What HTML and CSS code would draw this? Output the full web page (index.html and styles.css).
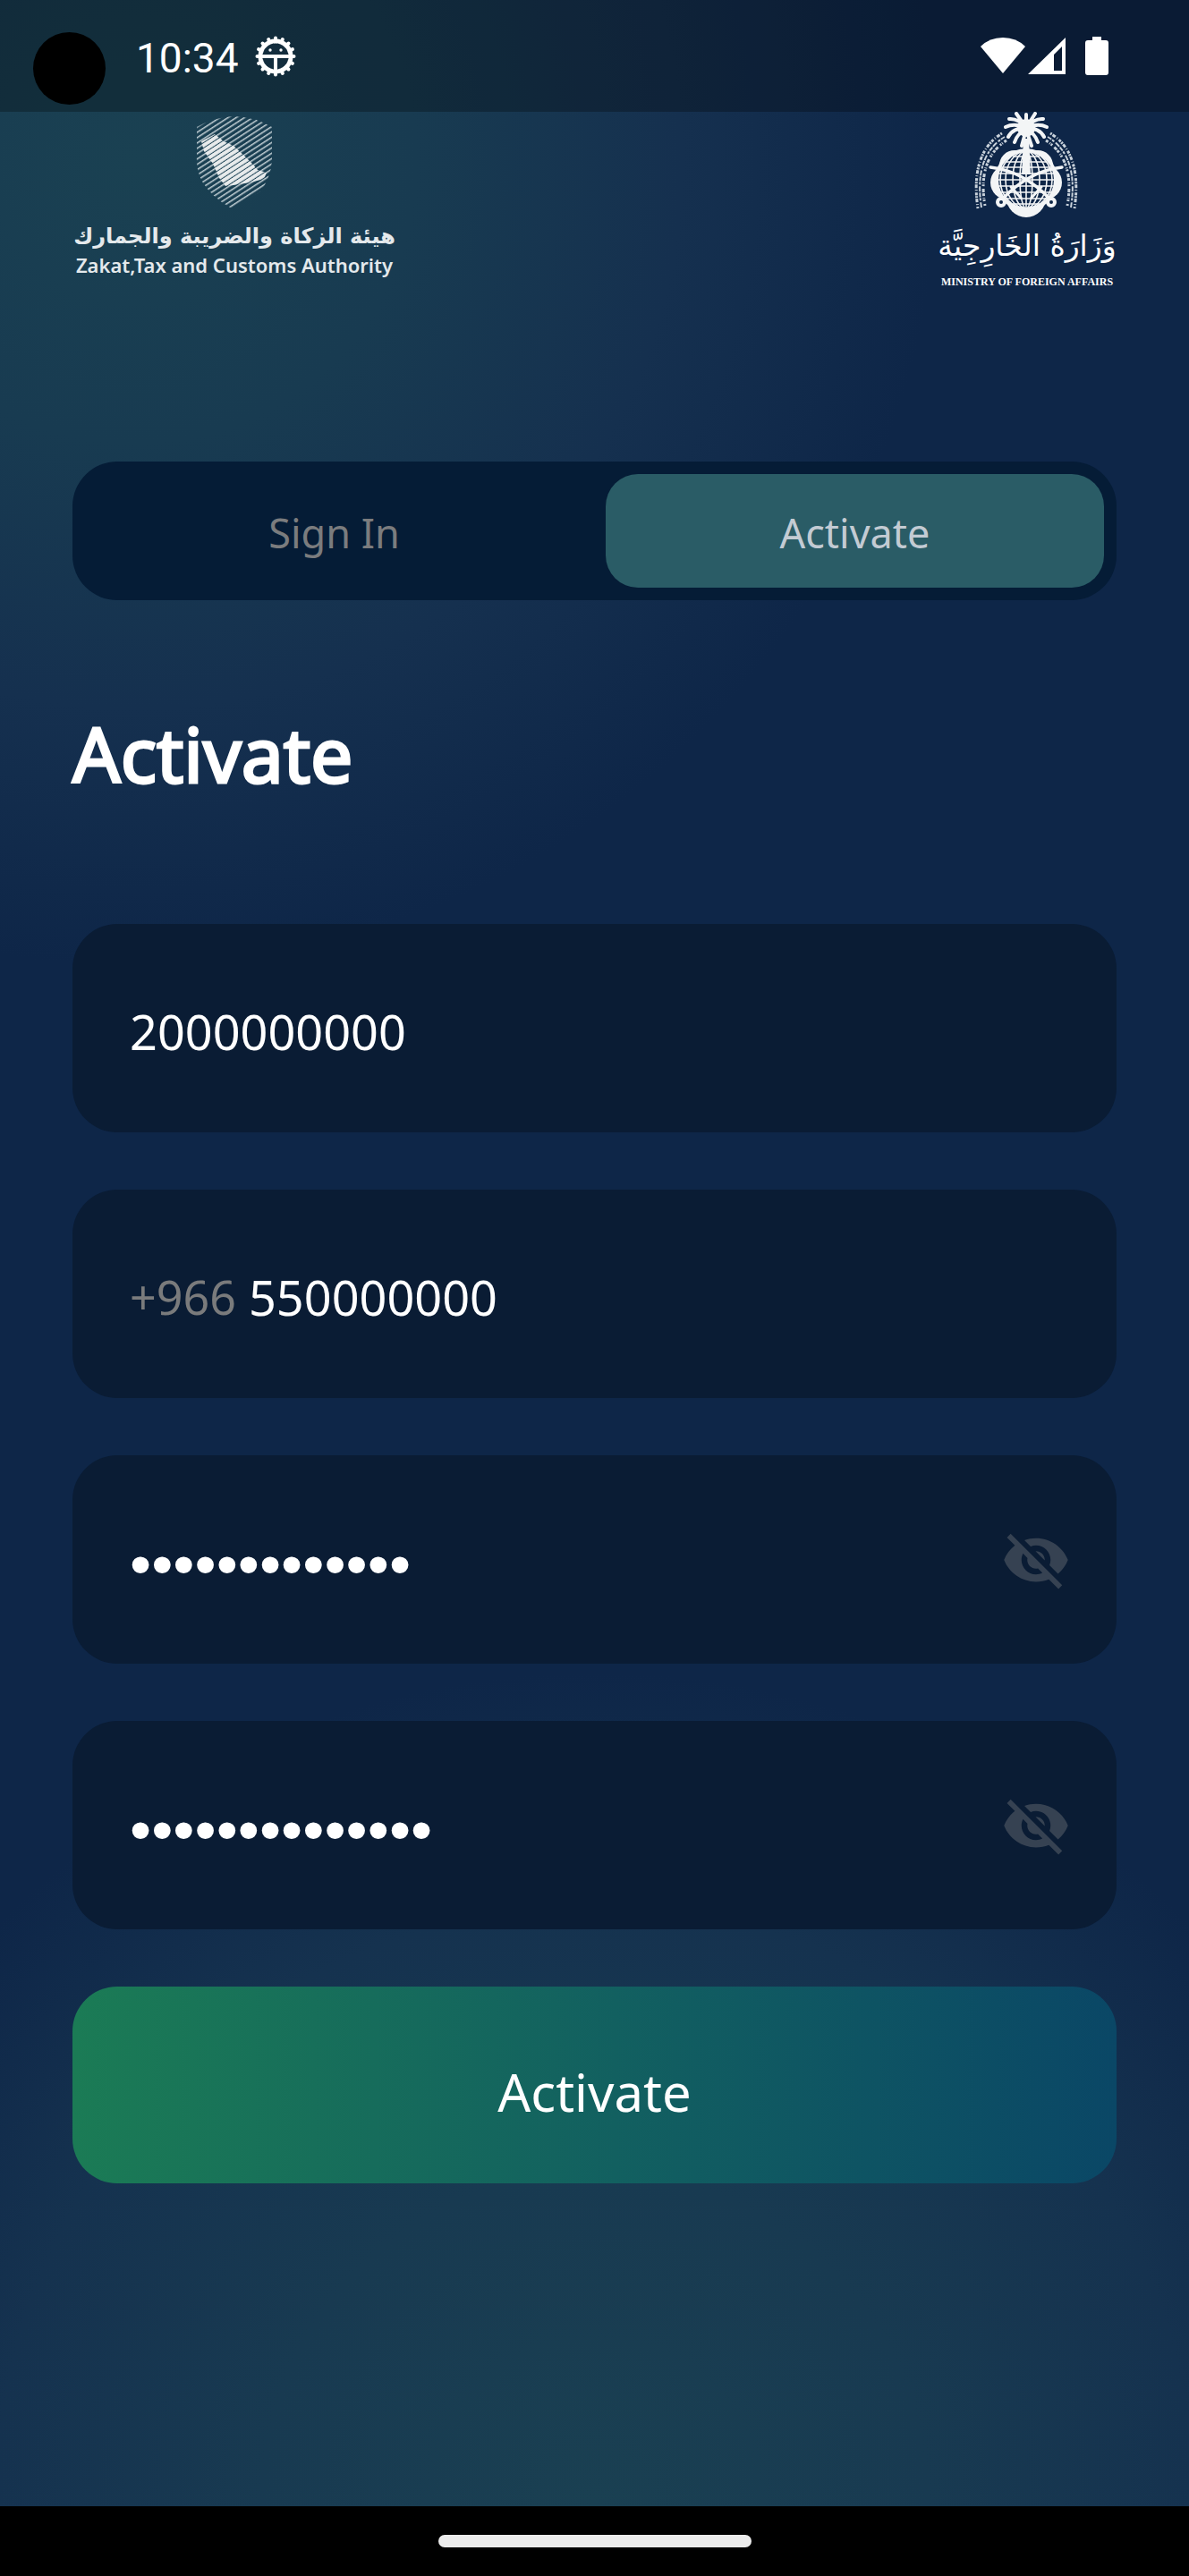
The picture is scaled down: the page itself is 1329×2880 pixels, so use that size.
FILE: index.html
```html
<!DOCTYPE html>
<html lang="en">
<head>
<meta charset="utf-8">
<meta name="viewport" content="width=device-width, initial-scale=1">
<title>Activate</title>
<link rel="stylesheet" href="styles.css">
</head>
<body>
<div class="screen">
  <div class="status">
    <span class="camera"></span>
    <span class="time">10:34</span>
    <svg class="gear" viewBox="0 0 46 46" aria-hidden="true">
      <circle cx="23" cy="23" r="17" fill="none" stroke="#fff" stroke-width="5"/>
      <g stroke="#fff" stroke-width="4" stroke-linecap="round">
        <path id="t" d="M23 2.500V43.500"/>
        <path d="M23 2.500V43.500" transform="rotate(22.500 23 23)"/>
        <path d="M23 2.500V43.500" transform="rotate(45 23 23)"/>
        <path d="M23 2.500V43.500" transform="rotate(67.500 23 23)"/>
        <path d="M23 2.500V43.500" transform="rotate(90 23 23)"/>
        <path d="M23 2.500V43.500" transform="rotate(112.500 23 23)"/>
        <path d="M23 2.500V43.500" transform="rotate(135 23 23)"/>
        <path d="M23 2.500V43.500" transform="rotate(157.500 23 23)"/>
      </g>
      <circle cx="23" cy="23" r="14.500" fill="#132d3d"/>
      <path d="M6 21h34v4H25v15h-4V25H6z" fill="#fff"/>
      <circle cx="17" cy="16" r="1.700" fill="#fff"/><circle cx="29" cy="16" r="1.700" fill="#fff"/>
    </svg>
    <span class="indicators">
      <svg width="50" height="43" viewBox="0 0 50 43" aria-hidden="true"><path d="M0 11Q10 1 25 1T50 11L25 41z" fill="#fff"/></svg>
      <svg width="42" height="43" viewBox="0 0 42 43" aria-hidden="true"><path d="M42 1v41H0zM38 11l-9 9v18h9z" fill="#fff" fill-rule="evenodd"/></svg>
      <svg class="battery" width="26" height="43" viewBox="0 0 26 43" aria-hidden="true"><path d="M8 0h10v4h5q3 0 3 3v33q0 3-3 3H3q-3 0-3-3V7q0-3 3-3h5z" fill="#fff"/></svg>
    </span>
  </div>

  <main class="content">
    <header class="logos">
      <div class="zatca">
        <svg width="86" height="104" viewBox="0 0 86 104" aria-hidden="true">
          <defs>
            <pattern id="thin" width="10" height="5" patternUnits="userSpaceOnUse" patternTransform="rotate(-33)"><rect width="10" height="1.500" fill="#c3d0d5"/></pattern>
            <pattern id="thick" width="10" height="5" patternUnits="userSpaceOnUse" patternTransform="rotate(-33)"><rect width="10" height="3.900" fill="#e8ebec"/></pattern>
          </defs>
          <path d="M1 12Q20 1 43 0Q66 1 85 12V50Q83 70 72 84L40 103Q18 91 7 73Q0 60 1 44z" fill="url(#thin)"/>
          <path d="M6 28L21 20L31 28L42 33L55 45L64 54L69 60L79 63L76 70L61 74L42 77L33 78L26 69L19 53L9 39z" fill="url(#thick)"/>
        </svg>
        <span class="zatca-ar" lang="ar" dir="rtl">هيئة الزكاة والضريبة والجمارك</span>
        <span class="zatca-en">Zakat,Tax and Customs Authority</span>
      </div>
      <div class="mofa">
        <svg width="200" height="120" viewBox="0 0 200 120" aria-hidden="true">
          <g fill="#f3f5f6">
            <circle cx="86" cy="60" r="17"/><circle cx="112" cy="60" r="17"/>
            <circle cx="78" cy="79" r="19"/><circle cx="120" cy="79" r="19"/>
            <circle cx="99" cy="96" r="22"/><circle cx="99" cy="76" r="35"/>
          </g>
          <circle cx="99" cy="76" r="31" fill="#0e2647"/>
          <g fill="none" stroke="#f3f5f6" stroke-width="1.600">
            <ellipse cx="99" cy="76" rx="7" ry="32"/><ellipse cx="99" cy="76" rx="15" ry="32"/><ellipse cx="99" cy="76" rx="23" ry="32"/><ellipse cx="99" cy="76" rx="29" ry="32"/>
            <path d="M99 44v64M84 50h30M76 56h46M71 62h56M68 69h62M67 76h64M68 83h62M71 90h56M76 97h46M84 103h30"/>
          </g>
          <g fill="none" stroke="#f3f5f6" stroke-width="4" stroke-linecap="round">
            <path d="M59 62Q96 66 126 98M139 62Q102 66 72 98" stroke-width="3.500"/>
            <path d="M82 84l11 12M116 84l-11 12" stroke-width="3"/>
          </g>
          <g fill="#0e2647" stroke="#f3f5f6" stroke-width="4">
            <circle cx="71" cy="101" r="4"/><circle cx="127" cy="101" r="4"/>
          </g>
          <path d="M96 30h6l2 40H94z" fill="#f3f5f6"/>
          <g fill="none" stroke="#f3f5f6" stroke-width="4" stroke-linecap="round">
            <path d="M99 18L88 2M99 18L109 2M99 18Q90 7 80 8M99 18Q108 7 118 8M99 18Q86 12 76 17M99 18Q112 12 122 17M99 18Q84 18 79 28M99 18Q114 18 119 28M99 20Q89 24 86 34M99 20Q109 24 112 34M99 20L94 38M99 20L105 38M99 18V3"/>
          </g>
          <circle cx="99" cy="18" r="10" fill="#f3f5f6"/>
          <g fill="none" stroke="#c9d2db">
            <path d="M72 24Q36 46 45 108" stroke-width="3" stroke-dasharray="2 1 4 2 1 2 3 1"/>
            <path d="M75 28Q40 49 49 107" stroke-width="2" stroke-dasharray="5 1 3 2 6 1"/>
            <path d="M77 32Q44 53 53 105" stroke-width="3" stroke-dasharray="3 2 1 1 2 3 4 1"/>
            <path d="M126 24Q162 46 153 108" stroke-width="3" stroke-dasharray="2 1 4 2 1 2 3 1"/>
            <path d="M123 28Q158 49 149 107" stroke-width="2" stroke-dasharray="5 1 3 2 6 1"/>
            <path d="M121 32Q154 53 145 105" stroke-width="3" stroke-dasharray="3 2 1 1 2 3 4 1"/>
          </g>
        </svg>
        <span class="mofa-ar" lang="ar" dir="rtl">وَزَارَةُ الخَارِجِيَّة</span>
        <span class="mofa-en">MINISTRY OF FOREIGN AFFAIRS</span>
      </div>
    </header>

    <nav class="tabs">
      <button type="button" class="tab">Sign In</button>
      <button type="button" class="tab tab-active">Activate</button>
    </nav>

    <h1 class="title">Activate</h1>

    <form class="form">
      <div class="field">
        <input type="text" inputmode="numeric" aria-label="ID number" value="2000000000">
      </div>
      <div class="field">
        <label class="prefix" for="mobile">+966</label>
        <input id="mobile" type="text" inputmode="tel" value="550000000">
      </div>
      <div class="field">
        <input class="secret" type="password" aria-label="Password" value="1234567890123">
        <button type="button" class="eye" aria-label="Show password">
          <svg width="78" height="78" viewBox="0 0 24 24"><path fill="currentColor" d="M12 7c2.76 0 5 2.24 5 5 0 .65-.13 1.26-.36 1.83l2.92 2.92c1.51-1.26 2.7-2.89 3.43-4.75-1.73-4.39-6-7.5-11-7.5-1.4 0-2.74.25-3.98.7l2.16 2.16C10.74 7.13 11.35 7 12 7zM2 4.27l2.28 2.28.46.46C3.08 8.3 1.78 10.02 1 12c1.73 4.39 6 7.5 11 7.5 1.55 0 3.03-.3 4.38-.84l.42.42L19.73 22 21 20.73 3.27 3 2 4.27zM7.53 9.8l1.55 1.55c-.05.21-.08.43-.08.65 0 1.66 1.34 3 3 3 .22 0 .44-.03.65-.08l1.55 1.55c-.67.33-1.41.53-2.2.53-2.76 0-5-2.24-5-5 0-.79.2-1.53.53-2.2zm4.31-.78l3.15 3.15.02-.16c0-1.66-1.34-3-3-3l-.17.01z"/></svg>
        </button>
      </div>
      <div class="field">
        <input class="secret" type="password" aria-label="Confirm password" value="12345678901234">
        <button type="button" class="eye" aria-label="Show password confirmation">
          <svg width="78" height="78" viewBox="0 0 24 24"><path fill="currentColor" d="M12 7c2.76 0 5 2.24 5 5 0 .65-.13 1.26-.36 1.83l2.92 2.92c1.51-1.26 2.7-2.89 3.43-4.75-1.73-4.39-6-7.5-11-7.5-1.4 0-2.74.25-3.98.7l2.16 2.16C10.74 7.13 11.35 7 12 7zM2 4.27l2.28 2.28.46.46C3.08 8.3 1.78 10.02 1 12c1.73 4.39 6 7.5 11 7.5 1.55 0 3.03-.3 4.38-.84l.42.42L19.73 22 21 20.73 3.27 3 2 4.27zM7.53 9.8l1.55 1.55c-.05.21-.08.43-.08.65 0 1.66 1.34 3 3 3 .22 0 .44-.03.65-.08l1.55 1.55c-.67.33-1.41.53-2.2.53-2.76 0-5-2.24-5-5 0-.79.2-1.53.53-2.2zm4.31-.78l3.15 3.15.02-.16c0-1.66-1.34-3-3-3l-.17.01z"/></svg>
        </button>
      </div>
      <button type="submit" class="submit">Activate</button>
    </form>
  </main>

  <div class="navbar"><span class="handle"></span></div>
</div>
</body>
</html>
```
FILE: styles.css
```css
* { box-sizing: border-box; }

body {
  margin: 0;
  background: #000;
  font-family: "Noto Sans", "Open Sans", sans-serif;
  color: #fff;
}

button, input {
  font: inherit;
  color: inherit;
  border: 0;
  padding: 0;
  background: none;
}

.screen {
  min-height: 100vh;
  display: flex;
  flex-direction: column;
  background:
    radial-gradient(circle 900px at 150px 180px, #1a4152 0%, #183b51 35%, #15304f 68%, rgba(14, 38, 72, 0) 100%),
    radial-gradient(circle 930px at 50% 2800px, #1a4052 0%, #183a51 40%, #15324f 72%, rgba(14, 38, 72, 0) 100%),
    #0e2648;
}

/* system status bar */
.status {
  height: 125px;
  padding: 0 90px 0 37px;
  display: flex;
  align-items: center;
  background: rgba(0, 0, 0, .27);
}
.camera {
  width: 81px;
  height: 81px;
  margin-top: 28px;
  border-radius: 50%;
  background: #000;
}
.time {
  margin-left: 34px;
  padding-top: 4px;
  font-family: Roboto, sans-serif;
  font-size: 46px;
  line-height: 54px;
}
.gear {
  width: 46px;
  height: 46px;
  margin-left: 18px;
}
.indicators {
  margin-left: auto;
  display: flex;
  gap: 3px;
}
.battery { margin-left: 19px; }

.content {
  flex: 1;
  padding: 0 81px;
}

/* authority logos */
.logos {
  height: 391px;
  display: flex;
  justify-content: space-between;
  align-items: flex-start;
}
.zatca, .mofa {
  display: flex;
  flex-direction: column;
  align-items: center;
  white-space: nowrap;
}
.zatca {
  width: 362px;
  padding-top: 5px;
  color: #e4e9ec;
}
.zatca-ar {
  margin-top: 12px;
  font-family: "DejaVu Sans", sans-serif;
  font-weight: 700;
  font-size: 24px;
  line-height: 36px;
}
.zatca-en {
  font-weight: 600;
  font-size: 22px;
  line-height: 28px;
}
.mofa { width: 200px; }
.mofa-ar {
  font-family: "DejaVu Sans", sans-serif;
  font-size: 33px;
  line-height: 60px;
}
.mofa-en {
  font-family: "Liberation Serif", serif;
  font-weight: 700;
  font-size: 12px;
  line-height: 20px;
}

/* tab switch */
.tabs {
  height: 155px;
  padding: 14px;
  display: flex;
  gap: 25px;
  border-radius: 50px;
  background: #051c36;
}
.tab {
  flex: 1;
  padding-top: 4px;
  border-radius: 36px;
  font-size: 45px;
  color: #7b7c7e;
}
.tab-active {
  background: #2a5c66;
  color: #c3cbd3;
}

.title {
  margin: 122px 0 140px;
  font-size: 84px;
  font-weight: 400;
  line-height: 100px;
  -webkit-text-stroke: 3px #fff;
}

/* form */
.form {
  display: flex;
  flex-direction: column;
  gap: 64px;
}
.field {
  height: 233px;
  padding: 0 51px 0 64px;
  display: flex;
  align-items: center;
  gap: 14px;
  border-radius: 50px;
  background: #0a1c34;
  font-size: 54px;
}
.field input {
  flex: 1;
  min-width: 0;
  height: 86px;
  padding-top: 6px;
  outline: 0;
}
.field .secret {
  padding-top: 10px;
  font-family: "Liberation Sans", sans-serif;
  font-size: 69px;
}
.prefix {
  padding-top: 6px;
  font-size: 52px;
  color: #7a7b7c;
}
.eye {
  display: flex;
  color: #364252;
}
.submit {
  height: 220px;
  padding-top: 14px;
  border-radius: 50px;
  font-size: 58px;
  background: linear-gradient(90deg, #1b7b55, #126060 52%, #0a4766);
}

/* gesture bar */
.navbar {
  height: 78px;
  display: flex;
  align-items: center;
  justify-content: center;
  background: #000;
}
.handle {
  width: 350px;
  height: 14px;
  border-radius: 7px;
  background: #ebebeb;
}
```
